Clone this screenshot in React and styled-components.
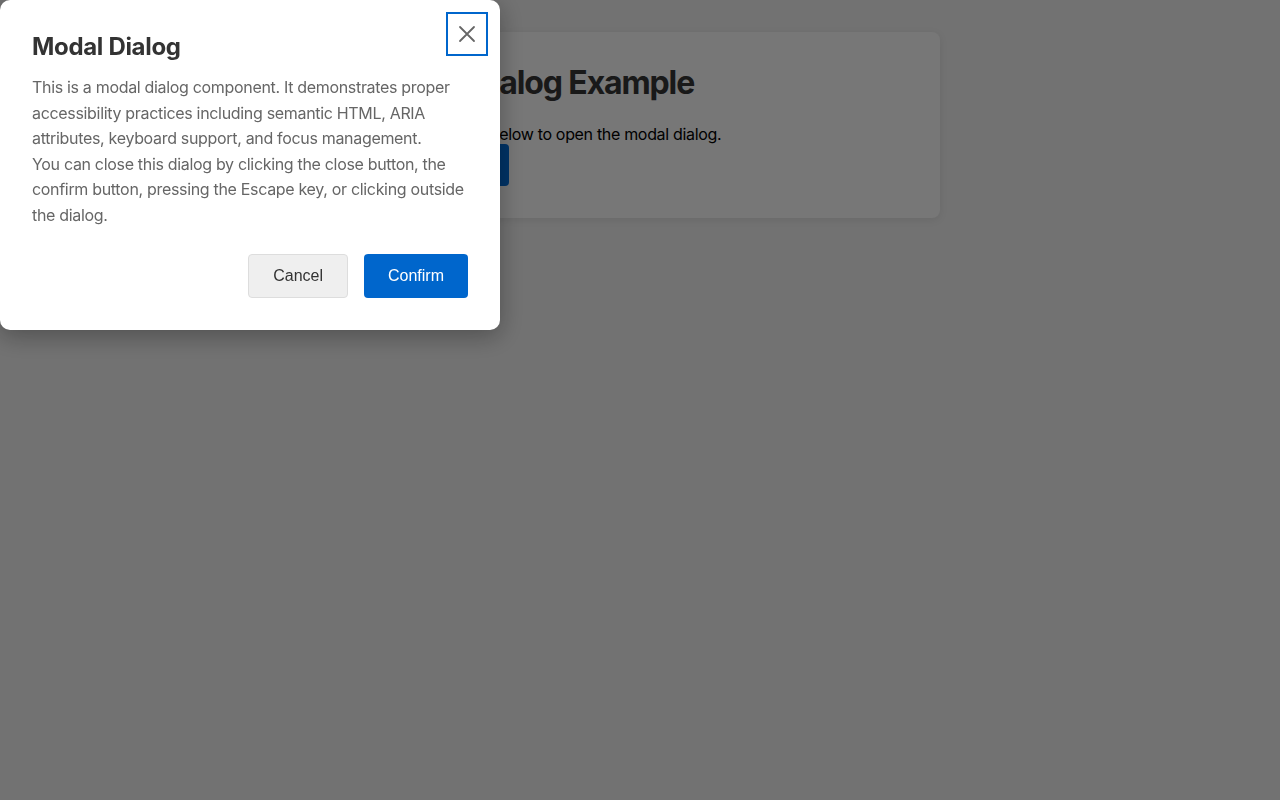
import React from "react";
import styled, { createGlobalStyle } from "styled-components";

const Global = createGlobalStyle`
  html, body { margin: 0; padding: 0; }
  body {
    font-family: Inter, "Noto Sans", "Liberation Sans", sans-serif;
    letter-spacing: -0.02em;
    background: #e4e4e4;
    color: #000;
  }
`;

const Page = styled.main`
  min-height: 800px;
  padding-top: 32px;
  box-sizing: border-box;
`;

const Card = styled.section`
  max-width: 600px;
  margin: 0 auto;
  padding: 32px;
  box-sizing: border-box;
  background: #eeeeee;
  border-radius: 8px;
  box-shadow: 0 2px 8px rgba(0, 0, 0, 0.08);
`;

const CardTitle = styled.h1`
  margin: 0 0 22px;
  font-size: 32px;
  line-height: 38px;
  font-weight: 700;
  letter-spacing: -0.035em;
  color: #333;
`;

const CardText = styled.p`
  margin: 0;
  font-size: 16px;
  line-height: 20px;
  color: #000;
`;

const OpenButton = styled.button`
  padding: 11px 24px;
  font-family: "Liberation Sans", Arial, sans-serif;
  font-size: 16px;
  line-height: 20px;
  border: none;
  border-radius: 4px;
  background: #0066cc;
  color: #fff;
`;

const Overlay = styled.div`
  position: fixed;
  inset: 0;
  background: rgba(0, 0, 0, 0.5);
`;

const Dialog = styled.div`
  position: fixed;
  top: 0;
  left: 0;
  width: 500px;
  box-sizing: border-box;
  padding: 32px;
  background: #fff;
  border-radius: 10px;
  box-shadow: 0 6px 24px rgba(0, 0, 0, 0.3);
`;

const CloseButton = styled.button`
  position: absolute;
  top: 12px;
  right: 12px;
  width: 42px;
  height: 44px;
  display: flex;
  align-items: center;
  justify-content: center;
  background: transparent;
  border: none;
  padding: 0;
  outline: 2px solid #0066cc;
  outline-offset: -2px;
  color: #666;
`;

const Title = styled.h2`
  margin: 0 0 14px;
  font-size: 24px;
  line-height: 29px;
  font-weight: 700;
  color: #333;
`;

const Body = styled.p`
  margin: 0;
  font-size: 16px;
  line-height: 25.6px;
  color: #666;
`;

const Actions = styled.div`
  display: flex;
  justify-content: flex-end;
  gap: 16px;
  margin-top: 25px;
`;

const ActionButton = styled.button`
  font-family: "Liberation Sans", Arial, sans-serif;
  letter-spacing: 0;
  font-size: 16px;
  line-height: 20px;
  padding: ${(p) => (p.$primary ? "12px 24px" : "11px 24px")};
  border-radius: 4px;
  border: ${(p) => (p.$primary ? "none" : "1px solid #dddddd")};
  background: ${(p) => (p.$primary ? "#0066cc" : "#efefef")};
  color: ${(p) => (p.$primary ? "#fff" : "#333")};
`;

export default function App() {
  return (
    <>
      <Global />
      <Page>
        <Card>
          <CardTitle>Modal Dialog Example</CardTitle>
          <CardText>Click the button below to open the modal dialog.</CardText>
          <OpenButton>Open Dialog</OpenButton>
        </Card>
      </Page>
      <Overlay />
      <Dialog role="dialog" aria-modal="true" aria-labelledby="dlg-title">
        <CloseButton aria-label="Close dialog">
          <svg width="18" height="18" viewBox="0 0 18 18" fill="none">
            <path d="M2 2L16 16M16 2L2 16" stroke="currentColor" strokeWidth="1.8" strokeLinecap="round" />
          </svg>
        </CloseButton>
        <Title id="dlg-title">Modal Dialog</Title>
        <Body>
          This is a modal dialog component. It demonstrates proper accessibility
          practices including semantic HTML, ARIA attributes, keyboard support,
          and focus management.
          <br />
          You can close this dialog by clicking the close button, the confirm
          button, pressing the Escape key, or clicking outside the dialog.
        </Body>
        <Actions>
          <ActionButton>Cancel</ActionButton>
          <ActionButton $primary>Confirm</ActionButton>
        </Actions>
      </Dialog>
    </>
  );
}
